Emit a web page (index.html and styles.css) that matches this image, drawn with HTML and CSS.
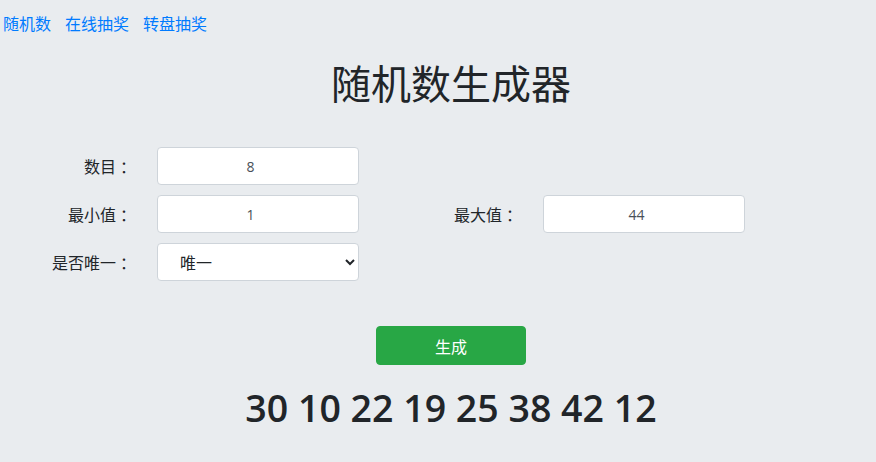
FILE: index.html
```html
<!DOCTYPE html>
<html lang="zh-CN">
<head>
<meta charset="utf-8">
<title>随机数生成器</title>
<link rel="stylesheet" href="styles.css">
</head>
<body>
<nav class="nav">
  <a href="#">随机数</a>
  <a href="#">在线抽奖</a>
  <a href="#">转盘抽奖</a>
</nav>
<main class="main">
  <h1 class="title">随机数生成器</h1>
  <form class="form">
    <label class="label">数目<span class="colon">：</span></label>
    <input class="field" type="number" value="8">
    <span></span><span></span>
    <label class="label">最小值<span class="colon">：</span></label>
    <input class="field" type="number" value="1">
    <label class="label">最大值<span class="colon">：</span></label>
    <input class="field" type="number" value="44">
    <label class="label">是否唯一<span class="colon">：</span></label>
    <select class="field select">
      <option>唯一</option>
      <option>不唯一</option>
    </select>
  </form>
  <div class="actions">
    <button class="btn" type="button">生成</button>
  </div>
  <div class="result">30 10 22 19 25 38 42 12</div>
</main>
</body>
</html>
```
FILE: styles.css
```css
html, body {
  margin: 0;
  padding: 0;
  background: #e9ecef;
}
body {
  font-family: "Open Sans", "Noto Sans CJK SC", sans-serif;
  color: #212529;
  font-size: 16px;
  line-height: 24px;
}
.nav {
  display: flex;
  gap: 14px;
  padding: 11px 0 0 3px;
  font-family: "Noto Sans CJK SC", sans-serif;
}
.nav a {
  color: #007bff;
  text-decoration: none;
  line-height: 24px;
}
.main {
  padding-left: 26px;
}
.title {
  margin: 23px 0 0;
  font-family: "Noto Sans CJK SC", sans-serif;
  font-weight: 400;
  font-size: 40px;
  line-height: 48px;
  text-align: center;
}
.form {
  margin: 41px 0 0 -26px;
  display: grid;
  grid-template-columns: 132px 202px 134px 202px;
  column-gap: 25px;
  row-gap: 10px;
  align-items: center;
}
.label {
  text-align: right;
  font-family: "Noto Sans CJK SC", sans-serif;
  font-size: 16px;
  line-height: 24px;
}
.colon {
  margin-left: 4px;
  margin-right: -4px;
}
.field {
  box-sizing: border-box;
  height: 38px;
  width: 202px;
  margin: 0;
  background: #fff;
  border: 1px solid #ced4da;
  border-radius: 4px;
  font-family: "Open Sans", "Noto Sans CJK SC", sans-serif;
  font-size: 14px;
  color: #495057;
  text-align: center;
  padding: 0 6px;
}
.select {
  text-align: left;
  padding-left: 18px;
  font-family: "Noto Sans CJK SC", sans-serif;
  font-size: 16px;
  color: #212529;
}
.actions {
  display: flex;
  justify-content: center;
  margin-top: 45px;
}
.btn {
  width: 150px;
  height: 39px;
  background: #28a745;
  color: #fff;
  border: 1px solid #28a745;
  border-radius: 4px;
  font-family: "Noto Sans CJK SC", sans-serif;
  font-size: 16px;
}
.result {
  margin-top: 19px;
  text-align: center;
  font-family: "Open Sans", sans-serif;
  font-weight: 600;
  font-size: 37.5px;
  line-height: 48px;
  color: #212529;
}
```
